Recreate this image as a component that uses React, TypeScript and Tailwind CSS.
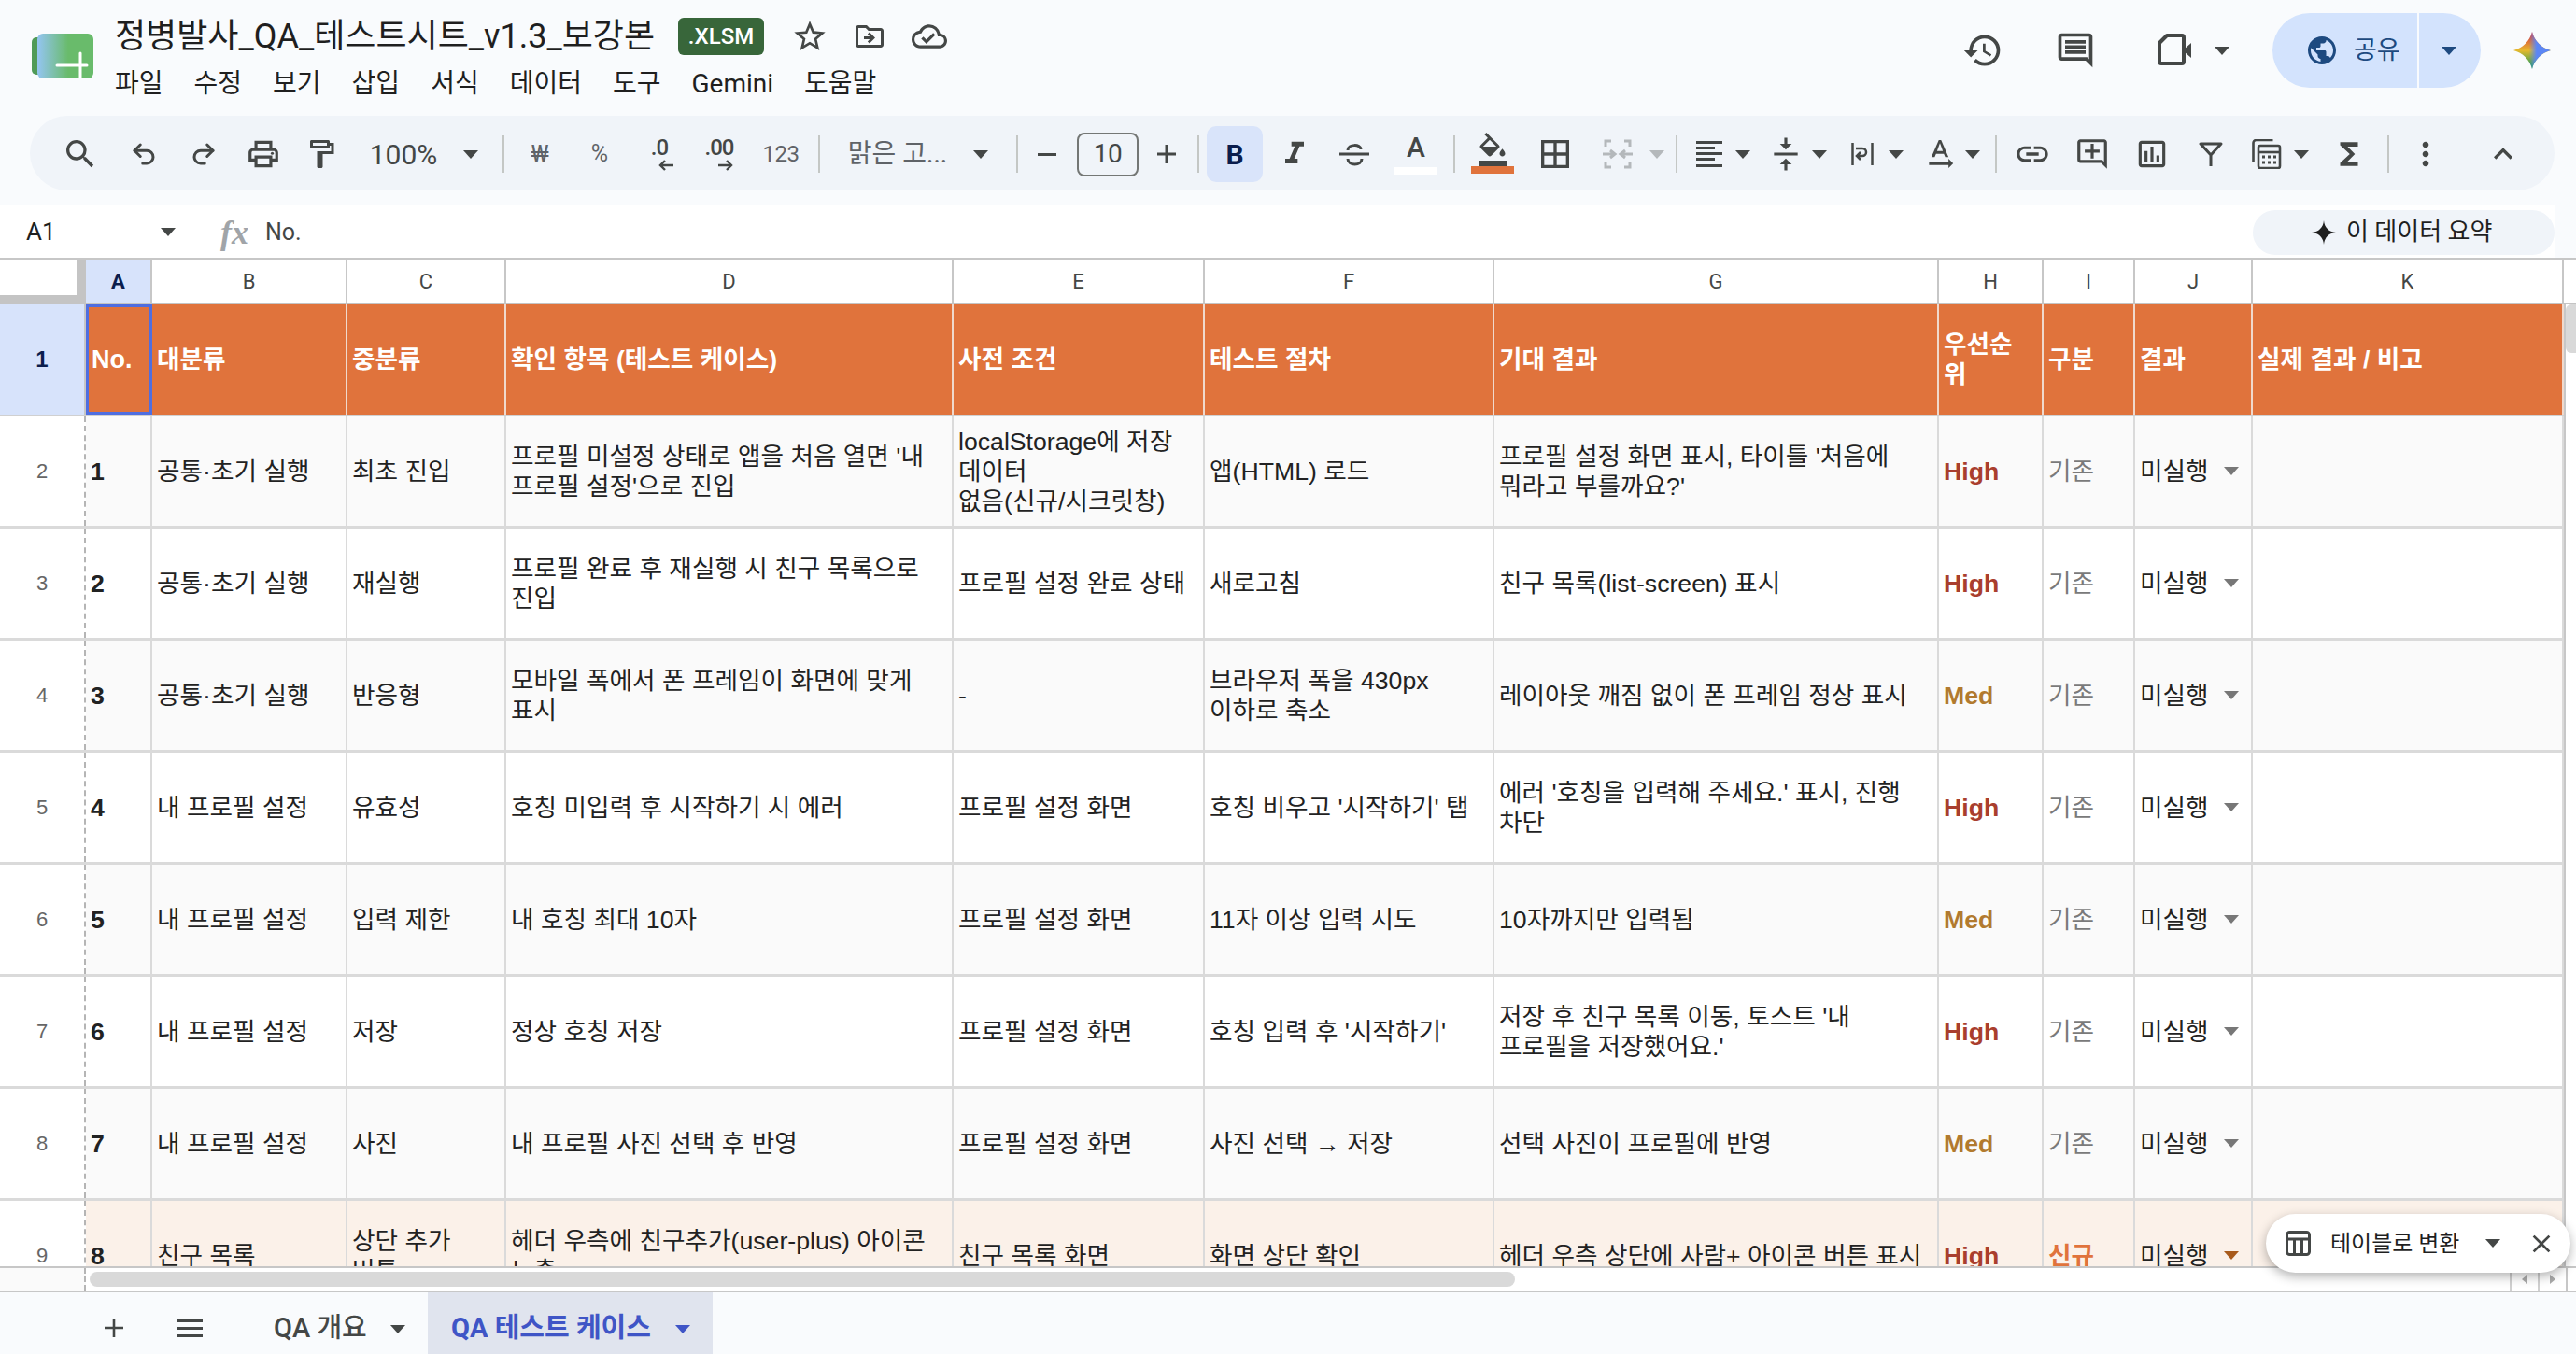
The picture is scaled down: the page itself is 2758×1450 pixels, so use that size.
import type { ReactElement, ReactNode } from 'react';
import {
  MdBorderAll,
  MdClose,
  MdExpandLess,
  MdFormatColorFill,
  MdFormatItalic,
  MdFunctions,
  MdHistory,
  MdLink,
  MdMoreVert,
  MdOutlineAddComment,
  MdOutlineCloudDone,
  MdOutlineComment,
  MdOutlineDriveFileMove,
  MdOutlineFormatPaint,
  MdOutlineInsertChart,
  MdOutlineLocalPrintshop,
  MdPublic,
  MdSearch,
  MdStarBorder,
  MdTextRotationNone,
  MdVerticalAlignCenter,
} from 'react-icons/md';
import { Redo2, Undo2 } from 'lucide-react';

const COLS = ['A', 'B', 'C', 'D', 'E', 'F', 'G', 'H', 'I', 'J', 'K'];
const GRID = 'grid grid-cols-[92px_71px_209px_170px_479px_269px_310px_476px_112px_98px_126px_333px]';

interface Row {
  n: number;
  major: string;
  minor: string;
  item: string;
  pre: string;
  steps: string;
  expected: string;
  priority: 'High' | 'Med';
  isNew?: boolean;
}

const ROWS: Row[] = [
  { n: 1, major: '공통·초기 실행', minor: '최초 진입', item: "프로필 미설정 상태로 앱을 처음 열면 '내\n프로필 설정'으로 진입", pre: 'localStorage에 저장\n데이터\n없음(신규/시크릿창)', steps: '앱(HTML) 로드', expected: "프로필 설정 화면 표시, 타이틀 '처음에\n뭐라고 부를까요?'", priority: 'High' },
  { n: 2, major: '공통·초기 실행', minor: '재실행', item: '프로필 완료 후 재실행 시 친구 목록으로\n진입', pre: '프로필 설정 완료 상태', steps: '새로고침', expected: '친구 목록(list-screen) 표시', priority: 'High' },
  { n: 3, major: '공통·초기 실행', minor: '반응형', item: '모바일 폭에서 폰 프레임이 화면에 맞게\n표시', pre: '-', steps: '브라우저 폭을 430px\n이하로 축소', expected: '레이아웃 깨짐 없이 폰 프레임 정상 표시', priority: 'Med' },
  { n: 4, major: '내 프로필 설정', minor: '유효성', item: '호칭 미입력 후 시작하기 시 에러', pre: '프로필 설정 화면', steps: "호칭 비우고 '시작하기' 탭", expected: "에러 '호칭을 입력해 주세요.' 표시, 진행\n차단", priority: 'High' },
  { n: 5, major: '내 프로필 설정', minor: '입력 제한', item: '내 호칭 최대 10자', pre: '프로필 설정 화면', steps: '11자 이상 입력 시도', expected: '10자까지만 입력됨', priority: 'Med' },
  { n: 6, major: '내 프로필 설정', minor: '저장', item: '정상 호칭 저장', pre: '프로필 설정 화면', steps: "호칭 입력 후 '시작하기'", expected: "저장 후 친구 목록 이동, 토스트 '내\n프로필을 저장했어요.'", priority: 'High' },
  { n: 7, major: '내 프로필 설정', minor: '사진', item: '내 프로필 사진 선택 후 반영', pre: '프로필 설정 화면', steps: '사진 선택 → 저장', expected: '선택 사진이 프로필에 반영', priority: 'Med' },
  { n: 8, major: '친구 목록', minor: '상단 추가\n버튼', item: '헤더 우측에 친구추가(user-plus) 아이콘\n노출', pre: '친구 목록 화면', steps: '화면 상단 확인', expected: '헤더 우측 상단에 사람+ 아이콘 버튼 표시', priority: 'High', isNew: true },
];

const HEADERS = ['대분류', '중분류', '확인 항목 (테스트 케이스)', '사전 조건', '테스트 절차', '기대 결과', '우선순\n위', '구분', '결과', '실제 결과 / 비고'];

function Caret({ className = 'fill-[#444746]' }: { className?: string }): ReactElement {
  return (
    <svg viewBox="0 0 16 9" className={`h-[9px] w-[16px] ${className}`}>
      <path d="M0 0h16L8 9z" />
    </svg>
  );
}

function Slot({ className, children }: { className: string; children?: ReactNode }): ReactElement {
  return <div className={`flex flex-none items-center justify-center ${className}`}>{children}</div>;
}

function Sep({ className }: { className: string }): ReactElement {
  return <div className={`h-[40px] w-[2px] flex-none bg-[#c4c7c5] ${className}`} />;
}

function Logo(): ReactElement {
  return (
    <svg viewBox="0 0 66 48" className="mt-[36px] h-[48px] w-[66px] flex-none">
      <defs>
        <linearGradient id="logo-fade" x1="0" x2="1" y1="0" y2="0">
          <stop offset="0" stopColor="#94c5f2" />
          <stop offset="0.55" stopColor="#69bb6b" />
          <stop offset="1" stopColor="#69bb6b" />
        </linearGradient>
      </defs>
      <rect x="0" y="4" width="30" height="40" rx="5" fill="#509a58" />
      <rect x="6" y="0" width="60" height="48" rx="6" fill="url(#logo-fade)" />
      <path d="M27 34h32M52 21v27" stroke="#fff" strokeWidth="3" strokeLinecap="round" fill="none" />
    </svg>
  );
}

function Gemini(): ReactElement {
  const star = 'M20 0C22.5 10 30 17.5 40 20C30 22.5 22.5 30 20 40C17.5 30 10 22.5 0 20C10 17.5 17.5 10 20 0Z';
  return (
    <svg viewBox="0 0 40 40" className="h-[40px] w-[40px]">
      <defs>
        <linearGradient id="gem-a" x1="0" x2="0" y1="0" y2="1">
          <stop offset="0.1" stopColor="#d9433d" />
          <stop offset="0.5" stopColor="#e6b92e" />
          <stop offset="0.9" stopColor="#2f9f52" />
        </linearGradient>
        <linearGradient id="gem-b" x1="0" x2="1" y1="0" y2="0">
          <stop offset="0.42" stopColor="#5b86f5" stopOpacity="0" />
          <stop offset="0.62" stopColor="#5b86f5" />
        </linearGradient>
      </defs>
      <path d={star} fill="url(#gem-a)" />
      <path d={star} fill="url(#gem-b)" />
    </svg>
  );
}

function VideoIcon(): ReactElement {
  return (
    <svg viewBox="0 0 48 48" className="h-[48px] w-[48px] fill-none stroke-[#444746]" strokeWidth="4">
      <path d="M13 8h16a2 2 0 0 1 2 2v26a2 2 0 0 1-2 2H7a2 2 0 0 1-2-2V16z" strokeLinejoin="round" />
      <path d="M31 23l8-7v16l-8-7z" fill="#444746" stroke="none" />
    </svg>
  );
}

function MergeIcon(): ReactElement {
  return (
    <svg viewBox="0 0 36 36" className="h-[36px] w-[36px] fill-none stroke-[#b4b8bb]" strokeWidth="3">
      <path d="M11 4H5v6M25 4h6v6M11 32H5v-6M25 32h6v-6" />
      <path d="M2 18h12M10 14l5 4-5 4M34 18H22M26 14l-5 4 5 4" />
    </svg>
  );
}

function AlignIcon(): ReactElement {
  return (
    <svg viewBox="0 0 28 28" className="h-[28px] w-[28px] fill-[#444746]">
      <rect x="0" y="0" width="28" height="3" />
      <rect x="0" y="6" width="20" height="3" />
      <rect x="0" y="12" width="28" height="3" />
      <rect x="0" y="18" width="20" height="3" />
      <rect x="0" y="25" width="28" height="3" />
    </svg>
  );
}

function StrikeIcon(): ReactElement {
  return (
    <svg viewBox="0 0 32 26" className="h-[26px] w-[32px] fill-none stroke-[#444746]" strokeWidth="3">
      <path d="M0 13h32" />
      <path d="M9 9C9 2 23 2 23 8M9 18C9 26 24 26 24 18" />
    </svg>
  );
}

function WrapIcon(): ReactElement {
  return (
    <svg viewBox="0 0 24 24" className="h-[24px] w-[24px] fill-none stroke-[#444746]" strokeWidth="2.5">
      <path d="M1.5 0v24M22.5 0v24" />
      <path d="M5 6h7a4 4 0 0 1 0 8H7M10 10l-4 4 4 4" />
    </svg>
  );
}

function FilterIcon(): ReactElement {
  return (
    <svg viewBox="0 0 26 26" className="h-[26px] w-[26px] fill-none stroke-[#444746]" strokeWidth="3">
      <path d="M2 2h22L13 14zM13 14v12" strokeLinejoin="round" />
    </svg>
  );
}

function CalcIcon(): ReactElement {
  return (
    <svg viewBox="0 0 32 32" className="h-[32px] w-[32px] fill-none stroke-[#444746]" strokeWidth="2.6">
      <path d="M1.5 25V4a3 3 0 0 1 3-3h18" />
      <rect x="7" y="7" width="23" height="24" rx="2" />
      <path d="M7 14h23" />
      <path d="M11 19h3M17 19h3M23 19h3M11 25h3M17 25h3M23 25h3" strokeWidth="3" />
    </svg>
  );
}

function DecimalIcon({ label, dir }: { label: string; dir: 'l' | 'r' }): ReactElement {
  return (
    <div className="flex flex-col items-center leading-none">
      <span className="h-[22px] text-[24px] font-medium leading-[22px] tracking-[-1px] text-[#444746]">{label}</span>
      <svg viewBox="0 0 16 12" className="ml-[14px] mt-[2px] h-[12px] w-[16px] fill-none stroke-[#444746]" strokeWidth="2.4">
        {dir === 'l' ? <path d="M16 6H2M7 1L2 6l5 5" /> : <path d="M0 6h14M9 1l5 5-5 5" />}
      </svg>
    </div>
  );
}

function Toolbar(): ReactElement {
  return (
    <div className="ml-[32px] flex h-[80px] w-[2703px] flex-none items-center rounded-full bg-[#f0f4f9] pt-[2px] text-[#444746]">
      <Slot className="ml-[34px] w-[40px]"><MdSearch size={40} /></Slot>
      <Slot className="ml-[28px] w-[40px]"><Undo2 size={30} strokeWidth={2.4} /></Slot>
      <Slot className="ml-[24px] w-[40px]"><Redo2 size={30} strokeWidth={2.4} /></Slot>
      <Slot className="ml-[24px] w-[40px]"><MdOutlineLocalPrintshop size={38} /></Slot>
      <Slot className="ml-[22px] w-[40px]"><MdOutlineFormatPaint size={36} /></Slot>
      <Slot className="ml-[30px] w-[76px] whitespace-nowrap text-[30px]">100%</Slot>
      <Slot className="ml-[26px] w-[16px]"><Caret /></Slot>
      <Sep className="ml-[26px]" />
      <Slot className="ml-[18px] w-[40px] text-[26px] text-[#5f6368]">₩</Slot>
      <Slot className="ml-[24px] w-[40px] text-[25px] text-[#5f6368]">%</Slot>
      <Slot className="ml-[24px] w-[40px]"><DecimalIcon label=".0" dir="l" /></Slot>
      <Slot className="ml-[24px] w-[40px]"><DecimalIcon label=".00" dir="r" /></Slot>
      <Slot className="ml-[26px] w-[40px] text-[24px] tracking-[-0.5px] text-[#5f6368]">123</Slot>
      <Sep className="ml-[20px]" />
      <Slot className="ml-[30px] w-[106px] whitespace-nowrap text-[28px] text-[#5f6368]">맑은 고...</Slot>
      <Slot className="ml-[28px] w-[16px]"><Caret /></Slot>
      <Sep className="ml-[30px]" />
      <Slot className="ml-[21px] w-[20px]"><div className="h-[3px] w-[20px] bg-[#444746]" /></Slot>
      <Slot className="ml-[22px] h-[47px] w-[66px] rounded-[8px] border-2 border-[#747775] text-[28px] tracking-[-0.5px]">10</Slot>
      <Slot className="ml-[20px] w-[20px] text-[#444746]">
        <svg viewBox="0 0 20 20" className="h-[20px] w-[20px] stroke-[#444746]" strokeWidth="3"><path d="M0 10h20M10 0v20" /></svg>
      </Slot>
      <Sep className="ml-[23px]" />
      <Slot className="ml-[8px] h-[60px] w-[60px] rounded-[10px] bg-[#d9e4fa] text-[30px] font-bold text-[#0b1d4d]">B</Slot>
      <Slot className="ml-[14px] w-[40px]"><MdFormatItalic size={40} /></Slot>
      <Slot className="ml-[24px] w-[40px]"><StrikeIcon /></Slot>
      <Slot className="ml-[23px] w-[46px] flex-col">
        <span className="h-[30px] text-[30px] font-medium leading-[30px]">A</span>
        <div className="mt-[6px] h-[8px] w-[46px] bg-white" />
      </Slot>
      <Sep className="ml-[17px]" />
      <Slot className="ml-[17px] w-[46px] flex-col">
        <MdFormatColorFill size={36} className="-mt-[2px] h-[36px]" />
        <div className="h-[8px] w-[46px] bg-[#e0733c]" />
      </Slot>
      <Slot className="ml-[24px] w-[40px]"><MdBorderAll size={40} /></Slot>
      <Slot className="ml-[27px] w-[40px]"><MergeIcon /></Slot>
      <Slot className="ml-[14px] w-[16px]"><Caret className="fill-[#b4b8bb]" /></Slot>
      <Sep className="ml-[12px]" />
      <Slot className="ml-[14px] w-[40px]"><AlignIcon /></Slot>
      <Slot className="ml-[8px] w-[16px]"><Caret /></Slot>
      <Slot className="ml-[18px] w-[40px]"><MdVerticalAlignCenter size={38} /></Slot>
      <Slot className="ml-[8px] w-[16px]"><Caret /></Slot>
      <Slot className="ml-[18px] w-[40px]"><WrapIcon /></Slot>
      <Slot className="ml-[8px] w-[16px]"><Caret /></Slot>
      <Slot className="ml-[19px] w-[40px]"><MdTextRotationNone size={40} /></Slot>
      <Slot className="ml-[7px] w-[16px]"><Caret /></Slot>
      <Sep className="ml-[16px]" />
      <Slot className="ml-[18px] w-[40px]"><MdLink size={40} /></Slot>
      <Slot className="ml-[24px] w-[40px]"><MdOutlineAddComment size={38} /></Slot>
      <Slot className="ml-[24px] w-[40px]"><MdOutlineInsertChart size={38} /></Slot>
      <Slot className="ml-[23px] w-[40px]"><FilterIcon /></Slot>
      <Slot className="ml-[20px] w-[40px]"><CalcIcon /></Slot>
      <Slot className="ml-[9px] w-[16px]"><Caret /></Slot>
      <Slot className="ml-[23px] w-[40px]"><MdFunctions size={38} /></Slot>
      <Sep className="ml-[21px]" />
      <Slot className="ml-[19px] w-[40px]"><MdMoreVert size={40} /></Slot>
      <Slot className="ml-[43px] w-[40px]"><MdExpandLess size={40} /></Slot>
    </div>
  );
}

function TitleBar(): ReactElement {
  return (
    <div className="flex h-[124px] flex-none">
      <div className="ml-[34px]"><Logo /></div>
      <div className="ml-[23px] flex flex-col">
        <div className="mt-[13px] flex h-[52px] items-center">
          <span className="w-[578px] whitespace-nowrap text-[36px] text-[#1f1f1f]">정병발사_QA_테스트시트_v1.3_보강본</span>
          <span className="ml-[25px] flex h-[40px] w-[92px] items-center justify-center rounded-[6px] bg-[#38663a] text-[24px] font-medium text-white">.XLSM</span>
          <Slot className="ml-[29px] w-[40px] text-[#444746]"><MdStarBorder size={40} /></Slot>
          <Slot className="ml-[24px] w-[40px] text-[#444746]"><MdOutlineDriveFileMove size={36} /></Slot>
          <Slot className="ml-[24px] w-[40px] text-[#444746]"><MdOutlineCloudDone size={38} /></Slot>
        </div>
        <div className="mt-[7px] flex h-[36px] items-center gap-[33px] whitespace-nowrap text-[28px] text-[#1f1f1f]">
          <span>파일</span>
          <span>수정</span>
          <span>보기</span>
          <span>삽입</span>
          <span>서식</span>
          <span>데이터</span>
          <span>도구</span>
          <span>Gemini</span>
          <span>도움말</span>
        </div>
      </div>
      <div className="ml-auto mr-[27px] mt-[14px] flex h-[80px] items-center text-[#444746]">
        <Slot className="w-[44px]"><MdHistory size={48} /></Slot>
        <Slot className="ml-[55px] w-[44px]"><MdOutlineComment size={46} /></Slot>
        <Slot className="ml-[63px] w-[48px]"><VideoIcon /></Slot>
        <Slot className="ml-[16px] w-[16px]"><Caret /></Slot>
        <div className="ml-[46px] flex h-[80px] w-[223px] overflow-hidden rounded-full bg-[#d3e3fd] text-[#1d4a80]">
          <div className="flex w-[157px] items-center border-r-2 border-[#f9fbfd] pl-[35px]">
            <MdPublic size={36} />
            <span className="ml-[16px] text-[27px]">공유</span>
          </div>
          <Slot className="w-[66px] pr-[2px]"><Caret className="fill-[#1d4a80]" /></Slot>
        </div>
        <Slot className="ml-[35px] w-[40px]"><Gemini /></Slot>
      </div>
    </div>
  );
}

function FormulaBar(): ReactElement {
  return (
    <div className="flex h-[59px] flex-none border-b-2 border-[#c7c7c7] bg-[#f9fbfd]">
      <div className="flex w-[2735px] items-center bg-white pt-[2px]">
        <span className="ml-[28px] w-[144px] text-[26px] text-[#1f1f1f]">A1</span>
        <Caret />
        <span className="ml-[48px] font-['Liberation_Serif',serif] text-[36px] font-bold italic text-[#a0a4a8]">fx</span>
        <span className="ml-[18px] text-[25px] text-[#444746]">No.</span>
        <div className="ml-auto flex h-[48px] w-[323px] items-center rounded-full bg-[#f0f4f9] pl-[63px] text-[26px] text-[#1f1f1f]">
          <svg viewBox="0 0 26 26" className="h-[26px] w-[26px] fill-[#1f1f1f]">
            <path d="M13 0C13.6 7.6 18.4 12.4 26 13C18.4 13.6 13.6 18.4 13 26C12.4 18.4 7.6 13.6 0 13C7.6 12.4 12.4 7.6 13 0Z" />
          </svg>
          <span className="ml-[11px] whitespace-nowrap">이 데이터 요약</span>
        </div>
      </div>
    </div>
  );
}

function ColumnHeader(): ReactElement {
  return (
    <div className={`${GRID} h-[48px] flex-none border-b-2 border-[#c4c4c4] text-[22px] text-[#444746]`}>
      <div className="border-b-[8px] border-r-[10px] border-[#c4c4c4] bg-white" />
      {COLS.map((c) =>
        c === 'A' ? (
          <div key={c} className="flex items-center justify-center border-r-2 border-[#c7c7c7] bg-[#d7e3fb] font-bold text-[#0b1d4d]">{c}</div>
        ) : (
          <div key={c} className="flex items-center justify-center border-r-2 border-[#c7c7c7] bg-white">{c}</div>
        ),
      )}
    </div>
  );
}

function HeaderRow(): ReactElement {
  return (
    <div className={`${GRID} h-[120px] flex-none border-b-2 border-[#d0d0d0] bg-[#e0733c]`}>
      <div className="flex items-center justify-center border-r-2 border-[#c7c7c7] bg-[#d7e3fb] text-[24px] font-bold text-[#0b1d4d]">1</div>
      <div className="flex items-center border-[3px] border-[#4f6ee0] pl-[3px] text-[27px] font-bold text-white">No.</div>
      {HEADERS.map((h) => (
        <div key={h} className="flex items-center whitespace-pre border-r-2 border-[#f0d9cc] pl-[5px] text-[26.67px] font-bold leading-[32px] text-white">{h}</div>
      ))}
    </div>
  );
}

function DataRow({ row, index }: { row: Row; index: number }): ReactElement {
  const bg = row.isNew ? 'bg-[#fbf1e9]' : index % 2 === 0 ? 'bg-[#fafafa]' : 'bg-white';
  const cell = 'flex items-center whitespace-pre border-r-2 border-[#dadada] pl-[5px]';
  const priorityColor = row.priority === 'High' ? 'text-[#a93e2e]' : 'text-[#b27a2e]';
  return (
    <div className={`${GRID} h-[120px] flex-none border-b-[3px] border-[#dadada] text-[26.67px] leading-[32px] text-[#222222]`}>
      <div className="flex items-center justify-center border-r-2 border-dashed border-[#b5b5b5] bg-white text-[22px] text-[#666666]">{row.n + 1}</div>
      <div className={`${cell} ${bg} font-bold`}>{row.n}</div>
      <div className={`${cell} ${bg}`}>{row.major}</div>
      <div className={`${cell} ${bg}`}>{row.minor}</div>
      <div className={`${cell} ${bg}`}>{row.item}</div>
      <div className={`${cell} ${bg}`}>{row.pre}</div>
      <div className={`${cell} ${bg}`}>{row.steps}</div>
      <div className={`${cell} ${bg}`}>{row.expected}</div>
      <div className={`${cell} ${bg} ${priorityColor} font-bold`}>{row.priority}</div>
      {row.isNew ? (
        <div className={`${cell} ${bg} font-bold text-[#e0733c]`}>신규</div>
      ) : (
        <div className={`${cell} ${bg} text-[#7a7a7a]`}>기존</div>
      )}
      <div className={`${cell} ${bg} justify-between pr-[13px]`}>
        <span>미실행</span>
        <Caret className={row.isNew ? 'fill-[#a85b1c]' : 'fill-[#777777]'} />
      </div>
      <div className={`${cell} ${bg}`} />
    </div>
  );
}

function BottomScroller(): ReactElement {
  return (
    <div className="flex h-[26px] flex-none items-center border-t-2 border-[#c7c7c7] bg-white">
      <div className="h-full w-[92px] border-r-2 border-dashed border-[#b5b5b5] bg-[#fafafa]" />
      <div className="ml-[4px] h-[16px] w-[1526px] rounded-full bg-[#d9d9d9]" />
      <div className="ml-[1065px] flex h-full border-l-2 border-[#d0d0d0]">
        <Slot className="w-[30px] border-r-2 border-[#d0d0d0]">
          <svg viewBox="0 0 6 10" className="h-[10px] w-[6px] fill-[#aaaaaa]"><path d="M6 0v10L0 5z" /></svg>
        </Slot>
        <Slot className="w-[30px] border-r-2 border-[#c7c7c7]">
          <svg viewBox="0 0 6 10" className="h-[10px] w-[6px] fill-[#aaaaaa]"><path d="M0 0v10l6-5z" /></svg>
        </Slot>
      </div>
    </div>
  );
}

function TabBar(): ReactElement {
  return (
    <div className="flex h-[68px] flex-none border-t-2 border-[#c7c7c7] bg-[#f9fbfd] text-[#444746]">
      <Slot className="ml-[106px] w-[32px] pt-[10px]">
        <svg viewBox="0 0 20 20" className="h-[20px] w-[20px] stroke-[#444746]" strokeWidth="2.6"><path d="M0 10h20M10 0v20" /></svg>
      </Slot>
      <Slot className="ml-[49px] w-[32px] pt-[10px]">
        <div className="flex w-[28px] flex-col gap-[5px]">
          <div className="h-[3px] bg-[#444746]" />
          <div className="h-[3px] bg-[#444746]" />
          <div className="h-[3px] bg-[#444746]" />
        </div>
      </Slot>
      <div className="ml-[74px] flex w-[139px] items-center pt-[12px] text-[29px] font-medium">
        <span className="whitespace-nowrap">QA 개요</span>
        <Caret className="ml-auto mr-[-2px] fill-[#444746]" />
      </div>
      <div className="ml-[26px] flex w-[305px] items-center bg-[#e0e4ee] pl-[25px] pt-[12px] text-[29px] font-bold text-[#3f55c6]">
        <span className="whitespace-nowrap">QA 테스트 케이스</span>
        <Caret className="ml-auto mr-[24px] fill-[#3f55c6]" />
      </div>
    </div>
  );
}

function TablePopup(): ReactElement {
  return (
    <div className="absolute left-[2426px] top-[1300px] flex h-[63px] w-[326px] items-center rounded-full bg-white text-[#444746] shadow-[0_4px_12px_rgba(0,0,0,0.3)]">
      <svg viewBox="0 0 27 27" className="ml-[21px] h-[27px] w-[27px] fill-none stroke-[#444746]" strokeWidth="3">
        <rect x="1.5" y="1.5" width="24" height="24" rx="3" />
        <path d="M1.5 9h24M9.5 9v16M17.5 9v16" />
      </svg>
      <span className="ml-[21px] whitespace-nowrap text-[24px] text-[#1f1f1f]">테이블로 변환</span>
      <div className="ml-[28px]"><Caret /></div>
      <div className="ml-[28px]"><MdClose size={32} /></div>
    </div>
  );
}

export default function App(): ReactElement {
  return (
    <div className="relative flex h-screen w-full flex-col overflow-hidden bg-white font-['Roboto','Noto_Sans_CJK_KR',sans-serif]">
      <div className="flex h-[219px] flex-none flex-col bg-[#f9fbfd]">
        <TitleBar />
        <Toolbar />
      </div>
      <FormulaBar />
      <ColumnHeader />
      <div className="flex h-[1030px] min-h-0 flex-none font-['Liberation_Sans','Noto_Sans_CJK_KR',sans-serif]">
        <div className="flex w-[2745px] flex-none flex-col overflow-hidden">
          <HeaderRow />
          {ROWS.map((row, i) => (
            <DataRow key={row.n} row={row} index={i} />
          ))}
        </div>
        <div className="flex flex-1 flex-col border-l-2 border-[#c7c7c7] bg-white">
          <div className="h-[52px] rounded-l-[6px] bg-[#d9d9d9]" />
        </div>
      </div>
      <BottomScroller />
      <TabBar />
      <TablePopup />
    </div>
  );
}
